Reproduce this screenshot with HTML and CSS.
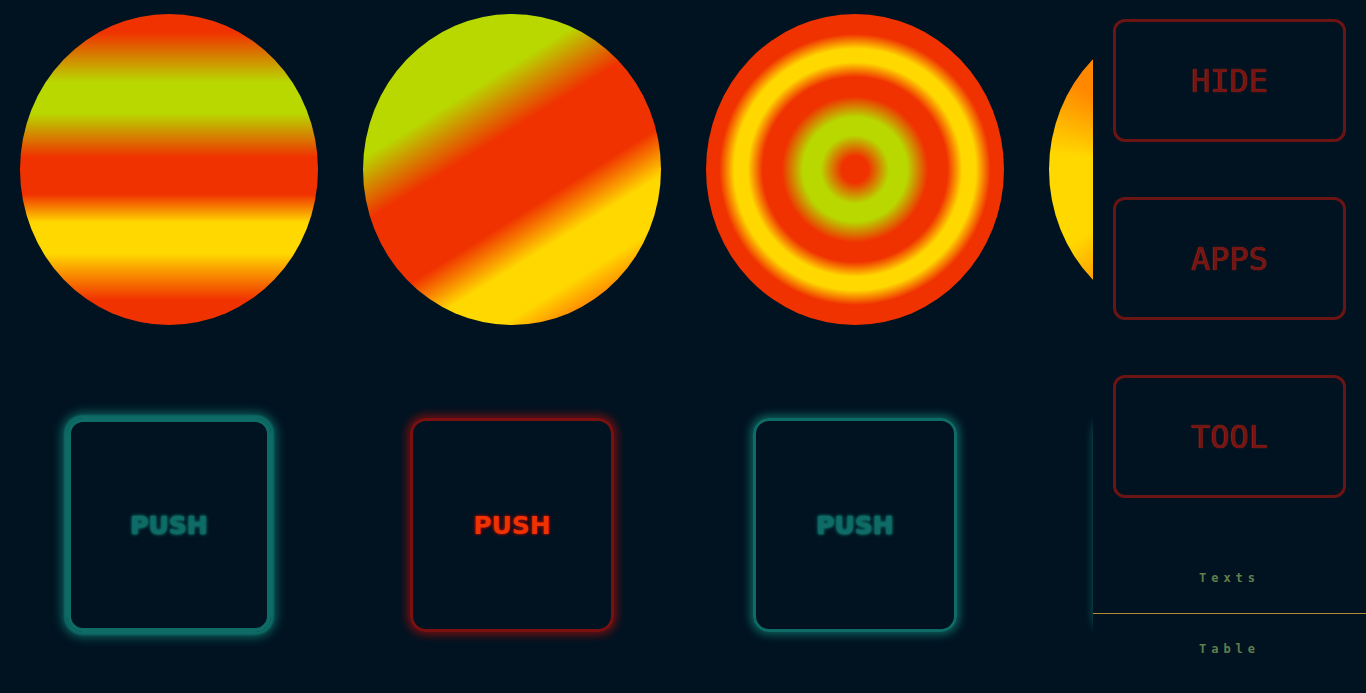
FILE: index.html
```html
<!DOCTYPE html>
<html lang="en">
<head>
<meta charset="UTF-8">
<meta name="viewport" content="width=device-width, initial-scale=1.0">
<title>Gradient Board</title>
<link rel="stylesheet" href="styles.css">
</head>
<body>
<div class="page">
  <main class="stage">
    <div class="orb orb-bands"></div>
    <div class="orb orb-slant"></div>
    <div class="orb orb-rings"></div>
    <div class="orb orb-fan"></div>

    <button class="push push-teal push-lit">PUSH</button>
    <button class="push push-red">PUSH</button>
    <button class="push push-teal">PUSH</button>
    <button class="push push-teal">PUSH</button>
  </main>

  <aside class="side">
    <button class="tile">HIDE</button>
    <button class="tile">APPS</button>
    <button class="tile">TOOL</button>
    <nav class="side-nav">
      <a href="#" class="side-link">Texts</a>
      <a href="#" class="side-link">Table</a>
    </nav>
  </aside>
</div>
</body>
</html>
```

FILE: styles.css
```css
body {
  margin: 0;
  padding: 0;
  background: #011321;
  font-family: "DejaVu Sans Mono", "Liberation Mono", monospace;
  overflow: hidden;
}

.page {
  display: flex;
  height: 100vh;
}

/* left board: 4 columns, the last one runs under the sidebar */
.stage {
  flex: 0 0 1093px;
  width: 1093px;
  overflow: hidden;
  display: grid;
  grid-template-columns: repeat(4, 298px);
  grid-template-rows: 311px 214px;
  column-gap: 45px;
  row-gap: 93px;
  padding: 14px 0 0 20px;
  box-sizing: border-box;
  align-content: start;
}

.orb {
  width: 298px;
  height: 311px;
  border-radius: 50%;
}

.orb-bands {
  background: linear-gradient(180deg,
    #f03200 6%, #b8d800 22%, #b8d800 32%,
    #f03200 46%, #f03200 58%, #ffd800 67%,
    #ffd800 77%, #f03200 92%);
}

.orb-slant {
  background: linear-gradient(148deg,
    #b8d800 29%, #f03200 42%, #f03200 60%,
    #ffd800 70%, #ffd800 80%, #ff8800 87%, #f03200 95%);
}

.orb-rings {
  background: radial-gradient(circle closest-side,
    #f03200 9%, #b8d800 23%, #b8d800 35%,
    #f03200 49%, #f03200 62%, #ffd800 72%,
    #ffd800 81%, #f03200 91%);
}

.orb-fan {
  background: conic-gradient(#f03200 0deg, #b8d800 90deg, #f03200 180deg,
    #ff8800 215deg, #ffd800 240deg, #ffd800 276deg,
    #ff8800 305deg, #ff8800 335deg, #f03200 360deg);
}

.push {
  justify-self: center;
  width: 204px;
  height: 214px;
  background: transparent;
  border: 3px solid;
  border-radius: 16px;
  font-family: "DejaVu Sans", "Liberation Sans", sans-serif;
  font-size: 25px;
  font-weight: bold;
  cursor: pointer;
}

.push-teal {
  border-color: #0e6b66;
  color: #0e6b66;
  box-shadow: 0 0 8px 3px rgba(14, 107, 102, 0.85);
  text-shadow: 0 0 2px #0e6b66, 0 0 3px #0e6b66, 0 0 4px #0e6b66;
}

.push-lit {
  border-width: 4px;
  box-shadow: 0 0 2px 3px #0e6b66, 0 0 10px 6px rgba(14, 107, 102, 0.8);
}

.push-red {
  border-color: #7a1010;
  color: #f03200;
  box-shadow: 0 0 9px 3px rgba(122, 16, 16, 0.9);
  text-shadow: 0 0 2px #7a1010, 0 0 3px #7a1010, 0 0 4px #7a1010;
}

/* sidebar */
.side {
  flex: 0 0 273px;
  display: flex;
  flex-direction: column;
  padding-top: 19px;
  background: #011321;
}

.tile {
  margin: 0 20px;
  height: 123px;
  background: transparent;
  border: 3px solid #6b1414;
  border-radius: 12px;
  color: #721515;
  font-family: "DejaVu Sans Mono", monospace;
  font-size: 32px;
  text-shadow: 0 0 1px #ff2a00;
  cursor: pointer;
}

.tile + .tile {
  margin-top: 55px;
}

.side-nav {
  margin-top: 45px;
  display: flex;
  flex-direction: column;
}

.side-link {
  height: 70px;
  display: flex;
  align-items: center;
  justify-content: center;
  font-size: 12px;
  font-weight: bold;
  letter-spacing: 5px;
  color: #5f7f4c;
  text-decoration: none;
}

.side-link:first-child {
  border-bottom: 1px solid #b08a30;
}
```
